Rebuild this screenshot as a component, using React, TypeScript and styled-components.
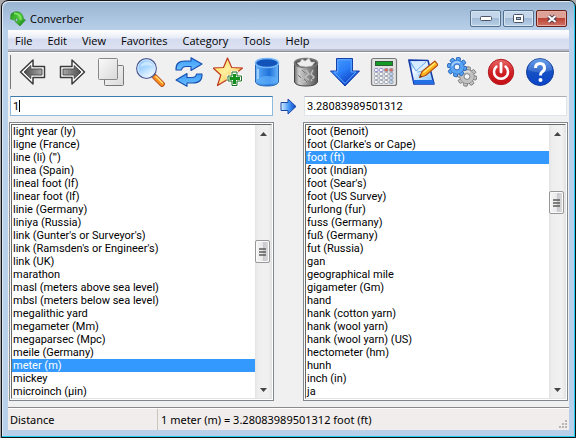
import React, { useState } from 'react';
import styled, { createGlobalStyle } from 'styled-components';

const GlobalStyle = createGlobalStyle`
  * { box-sizing: border-box; }
  body {
    margin: 0;
    background: #a9a9ad;
    font-family: 'Open Sans', 'Noto Sans', sans-serif;
    font-size: 11px;
    color: #000;
  }
  button, input, select { font: inherit; color: inherit; margin: 0; padding: 0; }
`;

const Frame = styled.div`
  display: flex;
  flex-direction: column;
  min-height: 100vh;
  margin-left: 1px;
  padding: 0 6px 7px;
  border: 1px solid #111;
  border-radius: 7px 7px 0 0;
  background: linear-gradient(#98b4d1, #b9d0ea 30px);
  box-shadow: inset -1px -1px 0 #1fcdf0, inset 1px 1px 0 #dfeaf6;
`;

const TitleBar = styled.header`
  display: flex;
  align-items: center;
  height: 29px;
  padding: 6px 2px 0 2px;
  gap: 4px;
`;

const Title = styled.h1`
  flex: 1;
  margin: 0;
  font-size: 11px;
  font-weight: 400;
  line-height: 20px;
`;

const WindowButtons = styled.div`
  display: flex;
  gap: 2px;
`;

const WindowButton = styled.button<{ $danger?: boolean }>`
  display: grid;
  place-items: center;
  width: 31px;
  height: 17px;
  border: 1px solid ${(p) => (p.$danger ? '#6b2018' : '#54708f')};
  border-radius: 2px;
  background: ${(p) =>
    p.$danger
      ? 'linear-gradient(#dda196 0 45%, #bd4334 50%, #cf7466)'
      : 'linear-gradient(#c3d6ea 0 45%, #a2bcd8 50%, #b8cfe6)'};
  box-shadow: inset 0 0 0 1px ${(p) => (p.$danger ? '#e5aea4' : '#d6e4f2')};
`;

const Client = styled.main`
  flex: 1;
  display: flex;
  flex-direction: column;
  background: #f0f0f0;
`;

const MenuBar = styled.nav`
  display: flex;
  gap: 1px;
  height: 21px;
  background: linear-gradient(#fff 0, #e8ecf6 8px, #d5dcef 9px, #dde2f2 19px, #b6bccc 19px);
`;

const MenuItem = styled.button`
  border: 0;
  padding: 0 7px;
  background: none;
  line-height: 19px;
`;

const ToolBar = styled.div`
  display: flex;
  align-items: center;
  height: 41px;
  padding-left: 2px;
  border-top: 1px solid #8d8f94;
  box-shadow: inset 0 1px 0 #fff;
`;

const Grip = styled.span`
  width: 1px;
  height: 34px;
  margin-right: 2px;
  background: #777;
`;

const ToolButton = styled.button`
  display: grid;
  place-items: center;
  width: 39px;
  height: 36px;
  border: 0;
  background: none;
  svg { display: block; width: 30px; height: 30px; }
`;

const Converter = styled.div`
  flex: 1;
  display: grid;
  grid-template-columns: 1fr 29px 1fr;
  grid-template-rows: 20px 1fr;
  row-gap: 6px;
  padding: 4px 1px 6px;
`;

const Field = styled.div`
  position: relative;
  display: flex;
  margin: 0 1px;
`;

const ValueInput = styled.input<{ $active?: boolean }>`
  flex: 1;
  min-width: 0;
  padding: 0 2px;
  font-family: Roboto, sans-serif;
  font-size: 11px;
  border: 1px solid ${(p) => (p.$active ? '#8fb9de' : '#dfe3ea')};
  border-top-color: ${(p) => (p.$active ? '#3d7bad' : '#abadb3')};
  background: #fff;
  outline: 0;
  caret-color: transparent;
`;

const Caret = styled.span`
  position: absolute;
  left: 9px;
  top: 4px;
  width: 1px;
  height: 12px;
  background: #000;
`;

const ConvertButton = styled.button`
  display: grid;
  place-items: center;
  border: 0;
  background: none;
`;

const ListFrame = styled.div<{ $column: number }>`
  grid-column: ${(p) => p.$column};
  display: flex;
  border: 1px solid #828790;
  padding: 1px;
  background: #fff;
`;

const ListInner = styled.div`
  flex: 1;
  min-width: 0;
  display: flex;
  border: 1px solid #e3e3e3;
  border-top-color: #696969;
  border-left-color: #696969;
`;

const UnitSelect = styled.select`
  flex: 1;
  min-width: 0;
  border: 0;
  border-radius: 0;
  outline: 0;
  overflow: hidden;
  scrollbar-width: none;
  background: #fff;
  font-family: Roboto, sans-serif;
  font-size: 11px;
  option {
    height: 13px;
    min-height: 13px;
    padding: 0 1px;
    line-height: 13px;
    color: #000;
  }
  option:checked {
    background: #3399ff linear-gradient(#3399ff, #3399ff);
    color: #fff !important;
    -webkit-text-fill-color: #fff;
  }
`;

const Track = styled.div`
  display: flex;
  flex-direction: column;
  width: 16px;
  background: linear-gradient(90deg, #e3e3e3, #eeeeee 3px, #f1f1f1 13px, #e6e6e6);
`;

const ArrowButton = styled.button`
  display: grid;
  place-items: center;
  height: 17px;
  border: 0;
  background: none;
`;

const Space = styled.span<{ $grow: number }>`
  flex: ${(p) => p.$grow} 1 0;
`;

const Thumb = styled.button`
  display: grid;
  place-items: center;
  width: 15px;
  height: 23px;
  border: 1px solid #979797;
  border-radius: 2px;
  background: linear-gradient(90deg, #f5f5f5, #e9e9eb 50%, #c8c8cc 55%, #dcdcdf);
  box-shadow: inset 0 0 0 1px #fafafa;
`;

const StatusBar = styled.footer`
  display: flex;
  height: 23px;
  border-top: 1px solid #8a8a8a;
  box-shadow: inset 0 1px 0 #fff;
  background: #f1edec;
  font-family: 'Noto Sans', 'Open Sans', sans-serif;
  line-height: 22px;
`;

const StatusCell = styled.span<{ $wide?: boolean }>`
  flex: ${(p) => (p.$wide ? '1' : '0 0 149px')};
  padding-left: ${(p) => (p.$wide ? '3px' : '2px')};
  border-left: ${(p) => (p.$wide ? '1px solid #c9c7ba' : '0')};
  margin-top: 1px;
`;

const SizeGrip = styled.svg`
  align-self: flex-end;
  margin: 0 1px 1px 0;
`;

const menus = ['File', 'Edit', 'View', 'Favorites', 'Category', 'Tools', 'Help'];

const leftUnits = [
  'light year (ly)', 'ligne (France)', "line (li) (''')", 'linea (Spain)', 'lineal foot (lf)',
  'linear foot (lf)', 'linie (Germany)', 'liniya (Russia)', "link (Gunter's or Surveyor's)",
  "link (Ramsden's or Engineer's)", 'link (UK)', 'marathon', 'masl (meters above sea level)',
  'mbsl (meters below sea level)', 'megalithic yard', 'megameter (Mm)', 'megaparsec (Mpc)',
  'meile (Germany)', 'meter (m)', 'mickey', 'microinch (µin)',
];

const rightUnits = [
  'foot (Benoit)', "foot (Clarke's or Cape)", 'foot (ft)', 'foot (Indian)', "foot (Sear's)",
  'foot (US Survey)', 'furlong (fur)', 'fuss (Germany)', 'fuß (Germany)', 'fut (Russia)', 'gan',
  'geographical mile', 'gigameter (Gm)', 'hand', 'hank (cotton yarn)', 'hank (wool yarn)',
  'hank (wool yarn) (US)', 'hectometer (hm)', 'hunh', 'inch (in)', 'ja',
];

const AppIcon = () => (
  <svg width="16" height="16" viewBox="0 0 16 16" aria-hidden="true">
    <defs>
      <linearGradient id="leaf" x1="0" y1="0" x2="1" y2="1">
        <stop offset="0" stopColor="#1d8a1d" />
        <stop offset="0.5" stopColor="#4fd03a" />
        <stop offset="1" stopColor="#0d6a10" />
      </linearGradient>
    </defs>
    <path d="M0.500 8 L1 3 Q4 0 8 0.800 Q13 2 13.500 8 L15.500 9 L10 15 L5 10.500 L8 10 Q8 6.500 5.500 7 L5.500 9.500Z" fill="url(#leaf)" stroke="#2c8a2c" strokeWidth="0.600" />
    <path d="M4 2.500 Q10 2 11 9" fill="none" stroke="#7fe265" strokeWidth="2" />
  </svg>
);

const ARROW = 'M2.500 15 L15 3 V9.500 H26.500 V20.500 H15 V27Z';
const ARROW_IN = 'M6 15 L12.800 8.500 V12 H24 V18 H12.800 V21.500Z';

const GrayArrow = ({ id, flip }: { id: string; flip?: boolean }) => (
  <svg viewBox="0 0 30 30" aria-hidden="true">
    <defs>
      <linearGradient id={id}>
        <stop offset="0" stopColor="#4c4c4c" />
        <stop offset="1" stopColor="#a8a8a8" />
      </linearGradient>
    </defs>
    <g transform={flip ? 'translate(30 0) scale(-1 1)' : undefined}>
      <path d={ARROW} fill="#fff" stroke="#3c3c3c" strokeWidth="1.500" strokeLinejoin="round" />
      <path d={ARROW_IN} fill={`url(#${id})`} stroke="#4e4e4e" strokeWidth="1" />
    </g>
  </svg>
);

const CopyIcon = () => (
  <svg viewBox="0 0 30 30" aria-hidden="true">
    <defs>
      <linearGradient id="sheet" x1="0" y1="0" x2="1" y2="1">
        <stop offset="0" stopColor="#fafafa" />
        <stop offset="1" stopColor="#d9d9d9" />
      </linearGradient>
    </defs>
    <rect x="8.500" y="8.500" width="19" height="20" rx="1" fill="url(#sheet)" stroke="#777" />
    <rect x="2.500" y="1.500" width="19" height="21" rx="1" fill="url(#sheet)" stroke="#888" />
  </svg>
);

const SearchIcon = () => (
  <svg viewBox="0 0 30 30" aria-hidden="true">
    <defs>
      <linearGradient id="lens" x1="0" y1="0" x2="0.600" y2="1">
        <stop offset="0" stopColor="#7dbcf8" />
        <stop offset="0.500" stopColor="#a5d4ff" />
        <stop offset="1" stopColor="#f4fbff" />
      </linearGradient>
    </defs>
    <path d="M20 20 L27 27" stroke="#a33f16" strokeWidth="5.500" strokeLinecap="round" />
    <path d="M20 20 L27 27" stroke="#fb8a1f" strokeWidth="4" strokeLinecap="round" />
    <path d="M21 19.500 L27.500 26" stroke="#ffe17a" strokeWidth="1.500" strokeLinecap="round" />
    <circle cx="11.500" cy="11.500" r="9.800" fill="url(#lens)" stroke="#4d5a94" strokeWidth="1.300" />
    <circle cx="11.500" cy="11.500" r="8.700" fill="none" stroke="#d8ebff" strokeWidth="1" />
    <path d="M5 10 Q7 4 13 4.500 Q17 5 18 9 Q11 7 5 10Z" fill="#e8f5ff" opacity="0.600" />
  </svg>
);

const RefreshIcon = () => (
  <svg viewBox="0 0 30 30" aria-hidden="true">
    <defs>
      <linearGradient id="loop" x1="0" y1="0" x2="0" y2="1">
        <stop offset="0" stopColor="#3b9af7" />
        <stop offset="1" stopColor="#6cc2ff" />
      </linearGradient>
    </defs>
    <g fill="url(#loop)" stroke="#174fb0" strokeWidth="1.100" strokeLinejoin="round">
      <path d="M2 13 Q1.500 4 11 4 H17 V0.800 L28 7 L17 13.500 V9.500 H12 Q8 9.500 7.500 13Z" />
      <path d="M28 17 Q28.500 26 19 26 H13 V29.300 L2 23 L13 16.500 V20.500 H18 Q22 20.500 22.500 17Z" />
    </g>
  </svg>
);

const StarIcon = () => (
  <svg viewBox="0 0 30 30" aria-hidden="true">
    <defs>
      <linearGradient id="star" x1="0" y1="0" x2="1" y2="1">
        <stop offset="0" stopColor="#ffd93a" />
        <stop offset="0.450" stopColor="#fff0a0" />
        <stop offset="1" stopColor="#f39a12" />
      </linearGradient>
    </defs>
    <path d="M14.500 1 L18.700 10.500 L29.500 11 L21.500 17.500 L24 28.500 L14.500 22.500 L4.500 28.500 L7.800 18 L0 11 L10.500 10.500Z" fill="url(#star)" stroke="#bd3a1d" strokeWidth="1.200" strokeLinejoin="round" />
    <path d="M19 15 h5 v4 h4.500 v5 h-4.500 v4.500 h-5 v-4.500 h-4 v-5 h4Z" fill="#168a1d" stroke="#fff" strokeWidth="2.500" />
    <path d="M19 15 h5 v4 h4.500 v5 h-4.500 v4.500 h-5 v-4.500 h-4 v-5 h4Z" fill="#fff" stroke="#176e1c" strokeWidth="1" />
    <path d="M21.500 17 V27 M16.500 21.500 H27" fill="none" stroke="#12901c" strokeWidth="3" />
  </svg>
);

const BinIcon = ({ full }: { full?: boolean }) => {
  const id = full ? 'can-gray' : 'can-blue';
  return (
    <svg viewBox="0 0 30 30" aria-hidden="true">
      <defs>
        <linearGradient id={id}>
          <stop offset="0" stopColor={full ? '#6d6d6d' : '#70b5f8'} />
          <stop offset="0.200" stopColor={full ? '#d2d2d2' : '#4a9bf0'} />
          <stop offset="0.600" stopColor={full ? '#8e8e8e' : '#2071da'} />
          <stop offset="1" stopColor={full ? '#555' : '#6bb6f8'} />
        </linearGradient>
      </defs>
      <path d="M3.500 6 V25 Q5 29 15 29 T26.500 25 V6Z" fill={`url(#${id})`} stroke={full ? '#444' : '#2666b5'} />
      <ellipse cx="15" cy="6" rx="11.500" ry="4.500" fill={full ? '#555' : '#1253ba'} stroke={full ? '#777' : '#74b8f8'} strokeWidth="1.500" />
      {full ? (
        <>
          <path d="M6 6 L9 5 L11 2 L14 4 L18 1 L20 5 L24 5 L21 9 L15 10 L9 9Z" fill="#ededed" stroke="#aaa" strokeWidth="0.700" />
          <path d="M8 14 l3 2 l-2 4 l4 2 M15 13 l3 4 l-4 3 l4 3 M22 13 l-2 4 l3 3 l-3 4 M8 24 l4 1 l4 -1" fill="none" stroke="#bdbdbd" strokeWidth="1.500" />
          <path d="M11 13 l3 3 M7 18 l3 3 M19 20 l3 3 M13 22 l3 3" stroke="#777" />
        </>
      ) : (
        <>
          <path d="M5.500 24 Q7 19 15 19 T25 22 V24.500 Q22 27.500 15 27.500 T5.500 24Z" fill="#5fb0fb" opacity="0.700" />
          <path d="M6 12 V22" stroke="#b5dcff" strokeWidth="1.500" />
        </>
      )}
    </svg>
  );
};

const DownIcon = () => (
  <svg viewBox="0 0 30 30" aria-hidden="true">
    <defs>
      <linearGradient id="down" x1="0" y1="0" x2="0.700" y2="1">
        <stop offset="0" stopColor="#4aa0ff" />
        <stop offset="0.500" stopColor="#2a7df8" />
        <stop offset="1" stopColor="#0734b5" />
      </linearGradient>
    </defs>
    <path d="M6.500 1.500 H22.500 V14 H29.500 L15 29 L0.500 14 H6.500Z" fill="url(#down)" stroke="#1740ae" strokeLinejoin="round" />
    <path d="M7.800 2.800 H21.200 V15 H26 L15 26.500 L4 15 H7.800Z" fill="none" stroke="#62aaff" />
  </svg>
);

const CalculatorIcon = () => (
  <svg viewBox="0 0 30 30" aria-hidden="true">
    <rect x="2.500" y="1.500" width="25" height="27" rx="2" fill="#e2e2e2" stroke="#787878" strokeWidth="1.200" />
    <rect x="6.500" y="4.500" width="17" height="4" fill="#139b26" stroke="#315d35" />
    {[0, 1, 2, 3].map((row) =>
      [0, 1, 2, 3].map((col) => (
        <rect
          key={`${row}-${col}`}
          x={5.5 + col * 5}
          y={11.5 + row * 4}
          width="3.500"
          height="3"
          rx="1"
          fill={row === 0 && col > 1 ? '#e26a5c' : col === 3 ? '#b9d2f2' : '#f8f8f8'}
          stroke={row === 0 && col < 2 ? '#7777c8' : '#8b96a6'}
          strokeWidth="0.800"
        />
      )),
    )}
  </svg>
);

const EditIcon = () => (
  <svg viewBox="0 0 30 30" aria-hidden="true">
    <defs>
      <linearGradient id="page" x1="0" y1="0" x2="1" y2="1">
        <stop offset="0" stopColor="#2e7df0" />
        <stop offset="0.300" stopColor="#f5fbff" />
        <stop offset="1" stopColor="#77baff" />
      </linearGradient>
    </defs>
    <path d="M0.800 3 L20 3.500 L26 27 H6Z" fill="url(#page)" stroke="#1438a5" strokeWidth="1.500" strokeLinejoin="round" />
    <path d="M5 23 L6.500 27 H26 L25 23Z" fill="#236fe5" />
    <path d="M2 4 L8 14 L18 5" fill="#d5ebff" stroke="#4d92e8" strokeWidth="0.800" />
    <path d="M9 15 L18 14 M10 18 L15 18" stroke="#7db4f3" />
    <path d="M11.500 20.500 L14 14.500 L27 4 L30 8 L17.500 18.500Z" fill="#ffb31f" stroke="#b24c13" strokeWidth="1.100" strokeLinejoin="round" />
    <path d="M15.500 15.500 L27 6" stroke="#fff07d" strokeWidth="1.300" />
    <path d="M11.500 20.500 L12.500 18 L14 19.500Z" fill="#333" />
  </svg>
);

const teeth = [0, 45, 90, 135, 180, 225, 270, 315];

const Gear = ({ cx, cy, fill, stroke }: { cx: number; cy: number; fill: string; stroke: string }) => (
  <g transform={`translate(${cx} ${cy})`}>
    {teeth.map((a) => (
      <rect key={a} x="-2" y="-9.700" width="4" height="5" rx="1" fill={fill} stroke={stroke} strokeWidth="0.900" transform={`rotate(${a + 10})`} />
    ))}
    <circle r="7" fill={fill} stroke={stroke} strokeWidth="0.700" />
    <circle r="6.600" fill={fill} />
    <path d="M-5 -1 A5 5 0 0 1 3 -4" fill="none" stroke="#fff" strokeWidth="1.500" opacity="0.500" />
    <circle r="2.900" fill="#f2f5fa" stroke={stroke} strokeWidth="0.900" />
  </g>
);

const GearsIcon = () => (
  <svg viewBox="0 0 30 30" aria-hidden="true">
    <Gear cx={20} cy={19.5} fill="#c2c2c2" stroke="#777" />
    <Gear cx={10} cy={10} fill="#5aa4f4" stroke="#2060b4" />
  </svg>
);

const PowerIcon = () => (
  <svg viewBox="0 0 30 30" aria-hidden="true">
    <defs>
      <linearGradient id="power" x1="0" y1="0" x2="0" y2="1">
        <stop offset="0" stopColor="#e96a6a" />
        <stop offset="0.500" stopColor="#d02226" />
        <stop offset="1" stopColor="#c50d14" />
      </linearGradient>
    </defs>
    <circle cx="15" cy="15" r="12.700" fill="url(#power)" stroke="#b31d22" strokeWidth="1" />
    <path d="M10.500 9.500 A7 7 0 1 0 19.500 9.500" fill="none" stroke="#fff" strokeWidth="2.500" strokeLinecap="round" />
    <path d="M15 6.500 V15" stroke="#fff" strokeWidth="2.800" strokeLinecap="round" />
  </svg>
);

const HelpIcon = () => (
  <svg viewBox="0 0 30 30" aria-hidden="true">
    <defs>
      <linearGradient id="help" x1="0" y1="0" x2="0" y2="1">
        <stop offset="0" stopColor="#4c92e8" />
        <stop offset="0.500" stopColor="#1550c4" />
        <stop offset="1" stopColor="#0a44c9" />
      </linearGradient>
    </defs>
    <circle cx="15" cy="15" r="13.500" fill="url(#help)" stroke="#143f9d" strokeWidth="1" />
    <path d="M3 13 A12 12 0 0 1 27 13 Q15 18 3 13Z" fill="#fff" opacity="0.150" />
    <path d="M10.500 11 Q10.500 6.500 15 6.500 T19.500 11 Q19.500 13.500 17 15 Q15.500 16 15.500 18.500" fill="none" stroke="#fff" strokeWidth="3" />
    <circle cx="15.500" cy="23" r="2" fill="#fff" />
  </svg>
);

const tools = [
  { name: 'Back', icon: <GrayArrow id="back" /> },
  { name: 'Forward', icon: <GrayArrow id="forward" flip /> },
  { name: 'Copy', icon: <CopyIcon /> },
  { name: 'Search', icon: <SearchIcon /> },
  { name: 'Swap', icon: <RefreshIcon /> },
  { name: 'Add to favorites', icon: <StarIcon /> },
  { name: 'Empty bin', icon: <BinIcon /> },
  { name: 'Full bin', icon: <BinIcon full /> },
  { name: 'Down', icon: <DownIcon /> },
  { name: 'Calculator', icon: <CalculatorIcon /> },
  { name: 'Edit', icon: <EditIcon /> },
  { name: 'Settings', icon: <GearsIcon /> },
  { name: 'Exit', icon: <PowerIcon /> },
  { name: 'Help', icon: <HelpIcon /> },
];

const ScrollArrow = ({ down }: { down?: boolean }) => (
  <svg width="7" height="4" viewBox="0 0 7 4" aria-hidden="true">
    <path d={down ? 'M0 0 H7 L3.500 4Z' : 'M0 4 H7 L3.500 0Z'} fill="#444" />
  </svg>
);

interface UnitListProps {
  label: string;
  column: number;
  units: string[];
  value: string;
  before: number;
  after: number;
  onChange: (unit: string) => void;
}

const UnitList = ({ label, column, units, value, before, after, onChange }: UnitListProps) => (
  <ListFrame $column={column}>
    <ListInner>
      <UnitSelect aria-label={label} size={units.length} value={value} onChange={(e) => onChange(e.target.value)}>
        {units.map((unit) => (
          <option key={unit}>{unit}</option>
        ))}
      </UnitSelect>
      <Track>
        <ArrowButton aria-label="Scroll up"><ScrollArrow /></ArrowButton>
        <Space $grow={before} />
        <Thumb aria-label="Scroll position">
          <svg width="7" height="8" viewBox="0 0 7 8" aria-hidden="true">
            <path d="M0 1 H7 M0 4 H7 M0 7 H7" stroke="#5c5c5c" strokeWidth="1.500" />
          </svg>
        </Thumb>
        <Space $grow={after} />
        <ArrowButton aria-label="Scroll down"><ScrollArrow down /></ArrowButton>
      </Track>
    </ListInner>
  </ListFrame>
);

export default function App() {
  const [amount, setAmount] = useState('1');
  const [from, setFrom] = useState('meter (m)');
  const [to, setTo] = useState('foot (ft)');

  return (
    <>
      <GlobalStyle />
      <Frame>
        <TitleBar>
          <AppIcon />
          <Title>Converber</Title>
          <WindowButtons>
            <WindowButton aria-label="Minimize">
              <svg width="12" height="5" viewBox="0 0 12 5" aria-hidden="true">
                <rect x="0.500" y="0.500" width="11" height="4" rx="1" fill="#fff" stroke="#4c5564" />
              </svg>
            </WindowButton>
            <WindowButton aria-label="Maximize">
              <svg width="11" height="9" viewBox="0 0 11 9" aria-hidden="true">
                <rect x="0.500" y="0.500" width="10" height="8" rx="1" fill="#fff" stroke="#4c5564" />
                <rect x="3.500" y="3.500" width="4" height="2" fill="#a7bdd6" stroke="#4c5564" />
              </svg>
            </WindowButton>
            <WindowButton aria-label="Close" $danger>
              <svg width="12" height="10" viewBox="0 0 12 10" aria-hidden="true">
                <path d="M2.500 2 L9.500 8 M9.500 2 L2.500 8" stroke="#4c4050" strokeWidth="4" />
                <path d="M2.500 2 L9.500 8 M9.500 2 L2.500 8" stroke="#fff" strokeWidth="2" />
              </svg>
            </WindowButton>
          </WindowButtons>
        </TitleBar>
        <Client>
          <MenuBar>
            {menus.map((menu) => (
              <MenuItem key={menu}>{menu}</MenuItem>
            ))}
          </MenuBar>
          <ToolBar>
            <Grip />
            {tools.map((tool) => (
              <ToolButton key={tool.name} aria-label={tool.name}>{tool.icon}</ToolButton>
            ))}
          </ToolBar>
          <Converter>
            <Field>
              <ValueInput $active aria-label="Amount" value={amount} onChange={(e) => setAmount(e.target.value)} />
              <Caret />
            </Field>
            <ConvertButton aria-label="Convert">
              <svg width="17" height="17" viewBox="0 0 17 17" aria-hidden="true">
                <defs>
                  <linearGradient id="go">
                    <stop offset="0" stopColor="#d6edff" />
                    <stop offset="0.500" stopColor="#4a9dfa" />
                    <stop offset="1" stopColor="#0c3fc0" />
                  </linearGradient>
                </defs>
                <path d="M1 4.500 H8 V1 L16 8.500 L8 16 V12.500 H1Z" fill="url(#go)" stroke="#1a48a8" strokeLinejoin="round" />
              </svg>
            </ConvertButton>
            <Field>
              <ValueInput aria-label="Result" readOnly value="3.28083989501312" />
            </Field>
            <UnitList label="Convert from" column={1} units={leftUnits} value={from} before={98} after={118} onChange={setFrom} />
            <UnitList label="Convert to" column={3} units={rightUnits} value={to} before={49} after={167} onChange={setTo} />
          </Converter>
          <StatusBar>
            <StatusCell>Distance</StatusCell>
            <StatusCell $wide>1 meter (m) = 3.28083989501312 foot (ft)</StatusCell>
            <SizeGrip width="9" height="9" viewBox="0 0 9 9" aria-hidden="true">
              <path d="M6 0 h2 v2 h-2Z M3 3 h2 v2 h-2Z M6 3 h2 v2 h-2Z M0 6 h2 v2 h-2Z M3 6 h2 v2 h-2Z M6 6 h2 v2 h-2Z" fill="#b9b5b3" />
            </SizeGrip>
          </StatusBar>
        </Client>
      </Frame>
    </>
  );
}
